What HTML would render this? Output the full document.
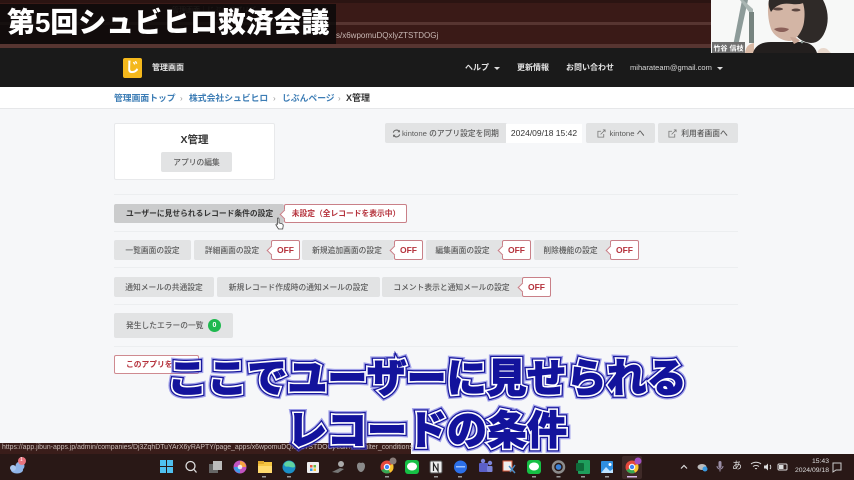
<!DOCTYPE html>
<html lang="ja"><head><meta charset="utf-8"><title>X管理</title>
<style>
html,body{margin:0;padding:0}
body{width:854px;height:480px;overflow:hidden;position:relative;background:#f6f7f9;font-family:"Liberation Sans","Noto Sans CJK JP",sans-serif}
div,span.a{position:absolute;box-sizing:border-box}
#w{left:0;top:0;width:854px;height:480px;overflow:hidden;filter:blur(.35px)}
.t{white-space:nowrap;line-height:1}
.b{background:#e2e3e4;border-radius:2px;color:#5a5a5a;font-size:7.75px;font-weight:500;display:flex;align-items:center;justify-content:center;white-space:nowrap}
.tag{background:#fff;border:1px solid #c98088;border-radius:2px;color:#b5323c;font-size:8.5px;font-weight:700;display:flex;align-items:center;justify-content:center;white-space:nowrap}
.tag:before{content:"";position:absolute;left:-4px;top:6px;width:6px;height:6px;background:#fff;border-left:1px solid #c98088;border-bottom:1px solid #c98088;transform:rotate(45deg)}
.hr{left:114px;width:624px;height:1px;background:#eceef0}
.n{color:#e4e4e4;font-size:8px;font-weight:700}
.bc{color:#3d7db5;font-size:8.8px;font-weight:700;top:94px}
.sep{color:#999;font-size:8px;top:95px}
.sub{left:0;width:854px;text-align:center;font-weight:900;font-size:40px;line-height:1;white-space:nowrap}
</style></head><body>
<div id="w">
<!-- browser chrome -->
<div style="left:0;top:0;width:854px;height:48px;background:#3a1a17"></div>
<div style="left:0;top:0;width:854px;height:3px;background:#2b1412"></div>
<div style="left:0;top:22px;width:854px;height:3px;background:#573531"></div>
<div style="left:0;top:44px;width:854px;height:4px;background:#573531"></div>
<div class="t" style="left:172px;top:7px;font-size:7px;color:#8a7570">管理画面｜じぶんアプリズ</div>
<div class="t" style="left:336px;top:32px;font-size:8px;color:#c8b8b4">s/x6wpomuDQxlyZTSTDOGj</div>

<!-- title box -->
<div style="left:0;top:4px;width:336px;height:40px;background:rgba(8,8,8,.82)"></div>
<div class="t" style="left:7px;top:9px;font-size:28px;font-weight:900;color:#fff;letter-spacing:-.1px">第5回シュビヒロ救済会議</div>

<!-- navbar -->
<div style="left:0;top:48px;width:854px;height:39px;background:#1a1a1a"></div>
<div style="left:123px;top:58px;width:19px;height:20px;background:#f4b81c;border-radius:2px;color:#fff;font-size:14px;font-weight:700;line-height:19px;text-align:center">じ</div>
<div class="t n" style="left:152px;top:64px">管理画面</div>
<div class="t n" style="left:465px;top:64px">ヘルプ</div>
<div style="left:494px;top:67px;border:3px solid transparent;border-top:3px solid #ddd"></div>
<div class="t n" style="left:517px;top:64px">更新情報</div>
<div class="t n" style="left:566px;top:64px">お問い合わせ</div>
<div class="t" style="left:630px;top:64px;color:#d8d8d8;font-size:7.55px">miharateam@gmail.com</div>
<div style="left:717px;top:67px;border:3px solid transparent;border-top:3px solid #ddd"></div>

<!-- breadcrumb -->
<div style="left:0;top:87px;width:854px;height:22px;background:#fff;border-bottom:1px solid #e6e7e9"></div>
<div class="t bc" style="left:114px">管理画面トップ</div><div class="t sep" style="left:180px">›</div>
<div class="t bc" style="left:189px">株式会社シュビヒロ</div><div class="t sep" style="left:273px">›</div>
<div class="t bc" style="left:282px">じぶんページ</div><div class="t sep" style="left:338px">›</div>
<div class="t" style="left:346px;top:94px;font-size:9px;font-weight:700;color:#333">X管理</div>

<!-- card -->
<div style="left:114px;top:123px;width:161px;height:57px;background:#fff;border:1px solid #e8e9eb;border-radius:2px"></div>
<div class="t" style="left:114px;width:161px;top:135px;text-align:center;font-size:10.5px;font-weight:700;color:#333">X管理</div>
<div class="b" style="left:161px;top:152px;width:71px;height:20px">アプリの編集</div>

<!-- top right -->
<div class="b" style="left:385px;top:123px;width:122px;height:20px;justify-content:flex-start;padding-left:7px"><svg width="9" height="9" viewBox="0 0 10 10" style="margin-right:1px"><path d="M1.5 4A3.6 3.6 0 0 1 8 2.8M8.5 6A3.6 3.6 0 0 1 2 7.2" fill="none" stroke="#666" stroke-width="1.2"/><path d="M8.8 .8V3.6H6M1.2 9.2V6.4H4" fill="#666"/></svg>kintone のアプリ設定を同期</div>
<div class="t" style="left:506px;top:124px;width:76px;height:19px;background:#fff;font-size:8.5px;color:#333;line-height:19px;text-align:center">2024/09/18 15:42</div>
<div class="b" style="left:586px;top:123px;width:69px;height:20px"><svg width="9" height="9" viewBox="0 0 10 10" style="margin-right:4px"><path d="M7.5 5.5V9H1V2.5H4.5M4 6 9 1M6.5 1H9V3.5" fill="none" stroke="#777" stroke-width=".9"/></svg>kintone へ</div>
<div class="b" style="left:658px;top:123px;width:80px;height:20px"><svg width="9" height="9" viewBox="0 0 10 10" style="margin-right:4px"><path d="M7.5 5.5V9H1V2.5H4.5M4 6 9 1M6.5 1H9V3.5" fill="none" stroke="#777" stroke-width=".9"/></svg>利用者画面へ</div>

<div class="hr" style="top:194px"></div>
<!-- row1 -->
<div class="b" style="left:114px;top:204px;width:170px;height:19px;background:#cbcccd;color:#333;font-weight:700;justify-content:flex-start;padding-left:12px">ユーザーに見せられるレコード条件の設定</div>
<div class="tag" style="left:284px;top:204px;width:123px;height:19px;font-size:7.75px;padding-left:1px">未設定（全レコードを表示中）</div>
<svg style="position:absolute;left:275px;top:217px" width="10" height="13" viewBox="0 0 10 13"><path d="M2.5 1.2c.8-.6 1.5 0 1.5.8V6l3 .8c1 .3 1.3 1 1.2 2L7.7 12H3.5L1 8c-.4-.9.5-1.4 1.4-.7V2z" fill="#fff" stroke="#444" stroke-width=".8"/></svg>
<div class="hr" style="top:231px"></div>
<!-- row2 -->
<div class="b" style="left:114px;top:240px;width:77px;height:20px">一覧画面の設定</div>
<div class="b" style="left:194px;top:240px;width:78px;height:20px;padding-right:2px">詳細画面の設定</div>
<div class="tag" style="left:271px;top:240px;width:29px;height:20px">OFF</div>
<div class="b" style="left:302px;top:240px;width:92px;height:20px;padding-right:2px">新規追加画面の設定</div>
<div class="tag" style="left:394px;top:240px;width:29px;height:20px">OFF</div>
<div class="b" style="left:426px;top:240px;width:77px;height:20px;padding-right:4px">編集画面の設定</div>
<div class="tag" style="left:502px;top:240px;width:29px;height:20px">OFF</div>
<div class="b" style="left:534px;top:240px;width:77px;height:20px;padding-right:4px">削除機能の設定</div>
<div class="tag" style="left:610px;top:240px;width:29px;height:20px">OFF</div>
<div class="hr" style="top:267px"></div>
<!-- row3 -->
<div class="b" style="left:114px;top:277px;width:100px;height:20px">通知メールの共通設定</div>
<div class="b" style="left:217px;top:277px;width:163px;height:20px">新規レコード作成時の通知メールの設定</div>
<div class="b" style="left:382px;top:277px;width:141px;height:20px;padding-right:2px">コメント表示と通知メールの設定</div>
<div class="tag" style="left:522px;top:277px;width:29px;height:20px">OFF</div>
<div class="hr" style="top:304px"></div>
<!-- row4 -->
<div class="b" style="left:114px;top:313px;width:119px;height:25px;justify-content:flex-start;padding-left:12px">発生したエラーの一覧</div>
<div style="left:208px;top:319px;width:13px;height:13px;border-radius:50%;background:#1fb84f;color:#fff;font-size:7px;font-weight:700;text-align:center;line-height:13px">0</div>
<div class="hr" style="top:346px"></div>
<!-- row5 -->
<div class="t" style="left:114px;top:355px;width:85px;height:19px;background:#fff;border:1px solid #cf8a90;border-radius:2px;color:#b5323c;font-size:7.75px;font-weight:700;line-height:17px;padding-left:11px">このアプリを削除</div>

<!-- status bar -->
<div style="left:0;top:443px;width:411px;height:12px;background:#3a1d1a"></div>
<div class="t" style="left:2px;top:445px;font-size:6.9px;color:#c9bcb8">https://app.jibun-apps.jp/admin/companies/Dj3ZqhDTuYArX6yRAPTY/page_apps/x6wpomuDQxlyZTSTDOGj/edit?tab=filter_conditions</div>

<!-- taskbar -->
<div style="left:0;top:454px;width:854px;height:26px;background:#291816"></div>

<!-- subtitles -->
<div class="sub" style="top:359px;-webkit-text-stroke:9px #4a4ad8;opacity:.5">ここでユーザーに見せられる</div>
<div class="sub" style="top:359px;-webkit-text-stroke:6.5px #18189c">ここでユーザーに見せられる</div>
<div class="sub" style="top:359px;-webkit-text-stroke:4px #fff">ここでユーザーに見せられる</div>
<div class="sub" style="top:359px;color:#13139c;-webkit-text-stroke:.8px #13139c">ここでユーザーに見せられる</div>
<div class="sub" style="top:411px;-webkit-text-stroke:9px #4a4ad8;opacity:.5">レコードの条件</div>
<div class="sub" style="top:411px;-webkit-text-stroke:6.5px #18189c">レコードの条件</div>
<div class="sub" style="top:411px;-webkit-text-stroke:4px #fff">レコードの条件</div>
<div class="sub" style="top:411px;color:#13139c;-webkit-text-stroke:.8px #13139c">レコードの条件</div>

<!-- taskbar icons -->
<svg style="position:absolute;left:0;top:455px" width="854" height="25" viewBox="0 455 854 25">
<ellipse cx="17" cy="470" rx="6" ry="3.5" fill="#8fb4e8"/><circle cx="20" cy="466" r="4.5" fill="#8fb4e8"/><circle cx="13" cy="468" r="3" fill="#a9c6ee"/>
<circle cx="22" cy="461" r="4" fill="#e8747f"/>
<g fill="#4fc0f0"><rect x="160" y="460" width="6" height="6"/><rect x="167" y="460" width="6" height="6"/><rect x="160" y="467" width="6" height="6"/><rect x="167" y="467" width="6" height="6"/></g>
<circle cx="190.500" cy="466" r="4.500" fill="none" stroke="#ddd" stroke-width="1.300"/><path d="M194 469.500l2.500 3" stroke="#ddd" stroke-width="1.300"/>
<rect x="209" y="464" width="9" height="9" fill="#666"/><rect x="213" y="461" width="9" height="9" fill="#bbb"/>
<circle cx="240" cy="467" r="6.500" fill="#c154c1"/><path d="M240 461a6 6 0 0 1 6 6h-6z" fill="#f4a340"/><path d="M240 467h-6a6 6 0 0 0 6 6z" fill="#3e9be8"/><circle cx="240" cy="467" r="2.300" fill="#fff" opacity=".8"/>
<rect x="258" y="462" width="14" height="11" fill="#f5c542"/><rect x="258" y="461" width="6" height="3" fill="#e0a92c"/><rect x="258" y="466" width="14" height="7" fill="#ffdb6e"/>
<rect x="262" y="476" width="4" height="1.500" fill="#999"/>
<circle cx="289" cy="467" r="6.500" fill="#1b8fc7"/><path d="M284 464a6 6 0 0 1 11 2c0 2-3 1.500-5 1-3-1-5 1-6-3z" fill="#5fd3a0"/><rect x="287" y="476" width="4" height="1.500" fill="#999"/>
<rect x="307" y="462" width="12" height="11" rx="1" fill="#eee"/><rect x="310" y="465" width="2.500" height="2.500" fill="#e8553c"/><rect x="313.500" y="465" width="2.500" height="2.500" fill="#6ab840"/><rect x="310" y="468.500" width="2.500" height="2.500" fill="#2f9be8"/><rect x="313.500" y="468.500" width="2.500" height="2.500" fill="#f5c030"/>
<path d="M332 472l8-4 4 1-6 4z" fill="#777"/><circle cx="341" cy="464" r="3" fill="#aaa"/>
<path d="M361 463c-2-1-4 0-4 3s2 6 4 6 4-3 4-6-2-4-4-3z" fill="#8a8a8a"/>
<circle cx="387" cy="467" r="6.500" fill="#e5483c"/><path d="M387 467l-5.600 3.300a6.500 6.500 0 0 0 8.800 2.300z" fill="#36a853"/><path d="M387 467l3.200 5.600a6.500 6.500 0 0 0 3.300-5.600 6 6 0 0 0-.9-3.200z" fill="#f8c52e"/><circle cx="387" cy="467" r="2.700" fill="#4285f4" stroke="#fff"/><circle cx="393" cy="461" r="3.500" fill="#8a7d7a"/><rect x="385" y="476" width="4" height="1.500" fill="#999"/>
<rect x="405" y="460" width="14" height="14" rx="3" fill="#16c045"/><ellipse cx="412" cy="466.500" rx="5" ry="4" fill="#fff"/>
<rect x="430" y="461" width="12" height="12" rx="1.500" fill="#eee" stroke="#555"/><path d="M433.500 471v-7.500l4.500 7.500v-7.500" stroke="#222" stroke-width="1.200" fill="none"/><rect x="434" y="476" width="4" height="1.500" fill="#999"/>
<circle cx="460.500" cy="467" r="6.500" fill="#2b6fe8"/><rect x="456" y="466" width="9" height="1.500" fill="#9cc0ff"/><rect x="458" y="476" width="4" height="1.500" fill="#999"/>
<rect x="479" y="463" width="9" height="9" rx="1" fill="#5b5fc7"/><circle cx="490" cy="463" r="2.200" fill="#7b83d8"/><rect x="487" y="466" width="5.500" height="6" rx="1" fill="#7b83d8"/><circle cx="483" cy="461" r="2.200" fill="#7b83d8"/>
<rect x="503" y="461" width="9" height="10" fill="#eee" stroke="#d85a3c"/><path d="M509 466l6 7M515 465l-5 7" stroke="#4a8ec8" stroke-width="1.400"/>
<rect x="527" y="460" width="14" height="14" rx="3" fill="#16c045"/><ellipse cx="534" cy="466.500" rx="5" ry="4" fill="#fff"/><rect x="532" y="476" width="4" height="1.500" fill="#999"/>
<circle cx="558.500" cy="467" r="5.500" fill="none" stroke="#8c8c8c" stroke-width="2.500"/><circle cx="558.500" cy="467" r="2.800" fill="#3a82d8"/><rect x="556.500" y="476" width="4" height="1.500" fill="#999"/>
<rect x="578" y="460" width="12" height="14" rx="1" fill="#1f9e5c"/><rect x="576" y="463" width="8" height="8" rx="1" fill="#0f6b3a"/><rect x="581" y="476" width="4" height="1.500" fill="#999"/>
<rect x="601" y="461" width="12" height="12" rx="1" fill="#2f8fe0"/><path d="M601 473l5-6 4 4 3-2v4z" fill="#bfe3ff"/><circle cx="610" cy="464.500" r="1.500" fill="#fff"/><rect x="605" y="476" width="4" height="1.500" fill="#999"/>
<rect x="622" y="456" width="20" height="23" rx="2" fill="#3f2a28"/>
<circle cx="632" cy="467" r="6.500" fill="#e5483c"/><path d="M632 467l-5.600 3.300a6.500 6.500 0 0 0 8.800 2.300z" fill="#36a853"/><path d="M632 467l3.200 5.600a6.500 6.500 0 0 0 3.300-5.600 6 6 0 0 0-.9-3.200z" fill="#f8c52e"/><circle cx="632" cy="467" r="2.700" fill="#4285f4" stroke="#fff"/><circle cx="638" cy="461" r="3.500" fill="#a24fc0"/><rect x="627" y="476" width="10" height="1.500" fill="#d7b8e8"/>
<path d="M681 468.500l3-3 3 3" fill="none" stroke="#ddd" stroke-width="1.200"/>
<ellipse cx="702" cy="467" rx="4.500" ry="3" fill="#bbb"/><circle cx="705" cy="469" r="2.500" fill="#3a9ae0"/>
<rect x="718.500" y="461" width="3" height="7" rx="1.500" fill="#9c8fa8"/><path d="M717 466a3 3 0 0 0 6 0M720 469v2.500" fill="none" stroke="#9c8fa8"/>
<path d="M751 464a8 8 0 0 1 10 0M753 466.500a5 5 0 0 1 6 0M755 468.800a2 2 0 0 1 2 0" fill="none" stroke="#ddd"/>
<path d="M764 465.500h2l2-2v7l-2-2h-2z" fill="#ddd"/><path d="M770 465a3 3 0 0 1 0 4" stroke="#ddd" fill="none"/>
<rect x="778" y="464" width="9" height="6" rx="1" fill="none" stroke="#ddd"/><rect x="779" y="465" width="4.500" height="4" fill="#ddd"/>
<path d="M833 463h8v7h-5l-3 2z" fill="none" stroke="#ccc"/>
</svg>
<div class="t" style="left:732px;top:462px;font-size:10px;color:#ddd">あ</div>
<div class="t" style="left:790px;top:459px;width:39px;text-align:right;font-size:6.8px;color:#ddd">15:43</div>
<div class="t" style="left:790px;top:468px;width:39px;text-align:right;font-size:6.8px;color:#ddd">2024/09/18</div>
<div class="t" style="left:20px;top:458px;font-size:5px;color:#fff">1</div>

<!-- webcam -->
<svg style="position:absolute;left:711px;top:0" width="143" height="53" viewBox="0 0 143 53">
<rect width="143" height="53" fill="#f7f8f7"/>
<path d="M31 0 22 46h5L37 0z" fill="#8d9b99"/><path d="M32 0l10 9v34h-4V12L29 0z" fill="#aab6b3"/>
<path d="M38 12h5v31h-5z" fill="#76837f"/>
<path d="M34 53c1-7 4-9 9-10v10z" fill="#d9b9a5"/>
<path d="M42 53c2-7 8-11 18-11h30c8 0 14 4 16 11z" fill="#231f1e"/>
<path d="M106 53c2-5 6-6 10-4l4 4z" fill="#e8d8cc"/>
<path d="M60 0h52c5 9 6 20 3 29-3 9-8 14-15 14-9-1-14-5-18-12L58 14z" fill="#2f2a28"/>
<path d="M58 0h33c3 8 3 15 2 22-1 8-7 18-14 19-8 0-16-5-19-12-3-9-4-20-2-29z" fill="#d3b5a5"/>
<path d="M58 0h40c-3 3-10 5-17 4S66 3 60 12c-2-4-3-8-2-12z" fill="#2f2a28"/>
<ellipse cx="67" cy="9" rx="5" ry="1.500" fill="#5c4640"/><ellipse cx="85" cy="10" rx="4.500" ry="1.500" fill="#5c4640"/>
<path d="M63 29c4-2 10-2 15 0-3 4-11 4-15 0z" fill="#8a5f58"/>
<path d="M79 37c4 0 8 1 10 4l-6 3z" fill="#c8a696"/>
<circle cx="91" cy="42" r="1.300" fill="#8b9a95"/>
<rect x="1" y="42" width="33" height="11" fill="#6f6f6f"/>
<text x="2.500" y="50.500" font-size="7" fill="#fff" font-weight="700" font-family="Liberation Sans,Noto Sans CJK JP,sans-serif">竹谷 信枝</text>
</svg>
</div>
</body></html>
